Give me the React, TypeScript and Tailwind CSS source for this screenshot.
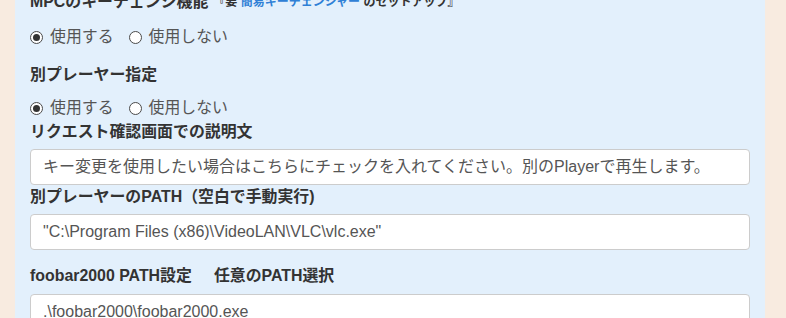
import React from "react";

const font = { fontFamily: '"Liberation Sans", "Noto Sans CJK JP", sans-serif' };

function Radio({ checked, label }: { checked: boolean; label: string }) {
  return (
    <label className="flex items-center">
      <span className="flex h-[13px] w-[13px] items-center justify-center rounded-full border border-[#4a4a4a] bg-white">
        {checked && <span className="h-[7px] w-[7px] rounded-full bg-[#333]" />}
      </span>
      <span className="ml-[7px] text-[15.9px] text-[#555]">{label}</span>
    </label>
  );
}

function Heading({ children, className = "" }: { children: React.ReactNode; className?: string }) {
  return (
    <div className={`flex h-[22px] items-center whitespace-nowrap text-[15.9px] font-bold text-[#333] ${className}`}>
      {children}
    </div>
  );
}

function Input({ value, className = "" }: { value: string; className?: string }) {
  return (
    <div
      className={`flex h-[36px] w-full items-center rounded-[4px] border border-[#cccccc] bg-white pl-[12px] text-[16px] text-[#555] whitespace-nowrap ${className}`}
    >
      {value}
    </div>
  );
}

export default function App() {
  return (
    <div className="h-[318px] w-[786px] overflow-hidden bg-[#f8ebe0]" style={font}>
      <div className="ml-[15px] h-full w-[750px] overflow-hidden bg-[#e3f0fc] px-[15px]">
        <div className="-mt-[9px] flex flex-col">
          <Heading>
            MPCのキーチェンジ機能
            <span className="ml-[5px] text-[12px] text-[#333]">
              『要 <span className="text-[#2f80d6]">簡易キーチェンジャー</span> のセットアップ』
            </span>
          </Heading>
          <div className="mt-[13px] flex h-[22px] items-center gap-[15px]">
            <Radio checked label="使用する" />
            <Radio checked={false} label="使用しない" />
          </div>
          <Heading className="mt-[16px]">別プレーヤー指定</Heading>
          <div className="mt-[11px] flex h-[22px] items-center gap-[15px]">
            <Radio checked label="使用する" />
            <Radio checked={false} label="使用しない" />
          </div>
          <Heading className="mt-[2px]">リクエスト確認画面での説明文</Heading>
          <Input
            className="mt-[6px]"
            value="キー変更を使用したい場合はこちらにチェックを入れてください。別のPlayerで再生します。"
          />
          <Heading className="mt-[1px]">別プレーヤーのPATH（空白で手動実行)</Heading>
          <Input className="mt-[6px]" value={'"C:\\Program Files (x86)\\VideoLAN\\VLC\\vlc.exe"'} />
          <Heading className="mt-[15px]">
            foobar2000 PATH設定<span className="ml-[22px]">任意のPATH選択</span>
          </Heading>
          <Input className="mt-[7px]" value=".\foobar2000\foobar2000.exe" />
        </div>
      </div>
    </div>
  );
}
